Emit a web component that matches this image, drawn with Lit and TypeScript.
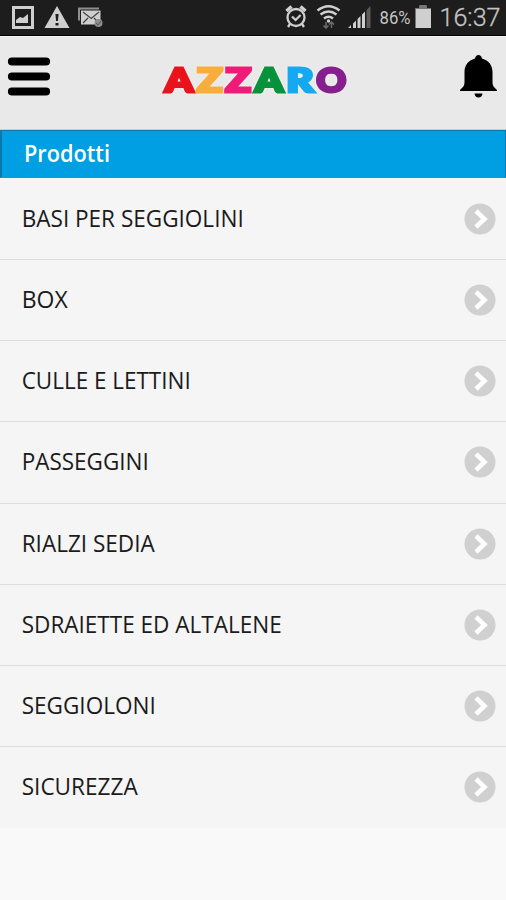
import { LitElement, html, svg, css } from "lit";
import { customElement } from "lit/decorators.js";

const ITEMS: [string, number][] = [
  ["BASI PER SEGGIOLINI", 222],
  ["BOX", 46],
  ["CULLE E LETTINI", 169],
  ["PASSEGGINI", 127],
  ["RIALZI SEDIA", 133],
  ["SDRAIETTE ED ALTALENE", 260],
  ["SEGGIOLONI", 134],
  ["SICUREZZA", 116],
];

// letter, left edge, width, colour
const LOGO: [string, number, number, string][] = [
  ["A", 2, 28, "#e9131d"],
  ["Z", 34, 25.5, "#f9ad3d"],
  ["Z", 62.5, 25.5, "#ee1c78"],
  ["A", 92, 28, "#07923c"],
  ["R", 123.5, 27, "#14a9f0"],
  ["O", 153.5, 29.5, "#86208e"],
];

@customElement("status-bar")
class StatusBar extends LitElement {
  static styles = css`
    :host { display: block; height: 36px; background: #1d1d1d; box-sizing: border-box; border-bottom: 1px solid #050505; }
    svg { display: block; }
    text { font-family: Roboto, sans-serif; fill: #c4c4c4; }
    .clock { font-weight: 300; }
  `;
  render() {
    return html`<svg width="506" height="35" viewBox="0 0 506 35">
      <g fill="#cfcfcf">
        <path fill-rule="evenodd" d="M12 6h22v23H12zM15 9v17h16V9z"/>
        <path d="M16 23v-3l4-3 3 1 5-4v9z"/>
        <path fill-rule="evenodd" d="M57 6 69.500 28H44.500zM55.400 14l.7 7h1.800l.7-7zM55.500 23v2.500h3V23z"/>
        <path fill="#8f8f8f" d="M78 7.500h21v13H78z"/>
        <path stroke="#1d1d1d" d="M80.500 10h20.500v15H80.500z"/>
        <path fill="none" stroke="#444" stroke-width="1.300" d="m83 12 8.200 6.500L99 12M83 23l5-5m11 5-5-5"/>
        <circle cx="98.500" cy="23" r="4" fill="#8d8d8d"/>
        <path d="m96 23 2 2 3-4" fill="none" stroke="#555"/>
      </g>
      <g fill="none" stroke="#cfcfcf">
        <circle cx="296" cy="17.500" r="8.500" stroke-width="2.300"/>
        <path stroke-width="2.300" d="m292 16.500 3.600 3.500 5-5M290 24l-2 3m14-3 2 3"/>
        <path stroke-width="3.500" d="m286.500 11 5-4.500m14 4.500-5-4.500"/>
        <path stroke-width="2.500" d="M317.500 10.500q11-8.500 22 0M320.500 14.500q8-6 16 0M324 18.500q4.500-3.500 9 0"/>
      </g>
      <circle cx="328.500" cy="21" r="1.700" fill="#cfcfcf"/>
      <path d="M326 22v6m-2.500-2.500L326 28l2.500-2.500M331.500 28v-6m-2.500 2.500 2.500-2.500 2.500 2.500" fill="none" stroke="#6c6c6c" stroke-width="1.500"/>
      <path d="M348 28l3-3v3zM353 23.500l3-3V28h-3zM357.500 19l3-3v12h-3zM362 14.500l3-3V28h-3z" fill="#cfcfcf"/>
      <path d="M366.500 10l4-4v22h-4z" fill="#5b5b5b"/>
      <text x="379.500" y="24" font-size="18" textLength="31" lengthAdjust="spacingAndGlyphs">86%</text>
      <path d="M415.500 8h4V5.500h7V8h4.500v20h-15.500z" fill="#cfcfcf"/>
      <path d="M415.500 8h4V5.500h7V8h4.500v1h-15.500z" fill="#777"/>
      <text class="clock" x="439.500" y="26" font-size="26.500" textLength="61" lengthAdjust="spacingAndGlyphs" stroke="#c4c4c4" stroke-width=".3">16:37</text>
    </svg>`;
  }
}

@customElement("app-root")
class AppRoot extends LitElement {
  static styles = css`
    :host { display: block; height: 900px; overflow: hidden; background: #f9f9f9; font-family: "Open Sans", "Noto Sans", sans-serif; }
    svg { display: block; overflow: visible; flex: none; }
    header { display: flex; align-items: flex-start; justify-content: space-between; height: 94px; box-sizing: border-box; background: #e9e9e9; border-top: 1px solid #f5f5f5; border-bottom: 1px solid #c9cccd; padding: 18px 9px 0 7px; }
    .menu { margin-top: 2px; }
    .logo { margin-top: 12px; margin-right: 2px; filter: drop-shadow(0 0 1px #fff8f0); }
    .logo text { font-family: Lato, sans-serif; font-weight: 900; font-size: 32px; stroke-width: 3.2px; }
    .title { height: 48px; box-sizing: border-box; background: #009fe3; border: 1px solid #0979ab; border-left-width: 2px; border-bottom-color: #1b98d0; padding-left: 22px; }
    .title text { fill: #fff; font-size: 23px; font-weight: 600; }
    main { padding-top: .8px; background: #f5f5f5; }
    .row { display: flex; align-items: center; justify-content: space-between; height: 81.200px; box-sizing: border-box; background: #f5f5f5; border-bottom: 1px solid #dcdcdc; padding: 0 10px 0 22px; }
    .row:last-child { border-color: #f5f5f5; }
    .row text { fill: #1b1b1b; font-size: 24px; }
  `;
  render() {
    return html`
      <status-bar></status-bar>
      <header>
        <svg class="menu" width="44" height="38" viewBox="0 0 44 38"><path d="M5 4.500h34M5 19.500h34M5 34.500h34" stroke="#000" stroke-width="8.200" stroke-linecap="round"/></svg>
        <svg class="logo" width="184" height="27" viewBox="0 0 184 27">
          ${LOGO.map(([c, x, w, fill]) => svg`<text x=${x} y="25" textLength=${w} lengthAdjust="spacingAndGlyphs" fill=${fill} stroke=${fill}>${c}</text>`)}
        </svg>
        <svg width="37" height="44" viewBox="0 0 37 44"><path d="M18.500 0c2 0 3 1.300 3.500 3.500 7 2 10.500 7 10.500 13.500v10c0 4 1.500 5 4.500 8v1H0v-1c3-3 4.500-4 4.500-8V17C4.500 10.500 8 5.500 15 3.500 15.500 1.300 16.500 0 18.500 0zM14.500 38.500h8q-.5 4-4 4t-4-4z"/></svg>
      </header>
      <div class="title"><svg width="86" height="46"><text x="0" y="31" textLength="86" lengthAdjust="spacingAndGlyphs">Prodotti</text></svg></div>
      <main>
        ${ITEMS.map(([label, w]) => html`<div class="row">
          <svg width="280" height="30"><text x="-.3" y="23" textLength=${w} lengthAdjust="spacingAndGlyphs">${label}</text></svg>
          <svg width="32" height="32" viewBox="0 0 32 32"><circle cx="16" cy="16" r="15.500" fill="#d0d0d0"/><path d="m12 8 8.500 8-8.500 8" fill="none" stroke="#fff" stroke-width="4.500"/></svg>
        </div>`)}
      </main>`;
  }
}
